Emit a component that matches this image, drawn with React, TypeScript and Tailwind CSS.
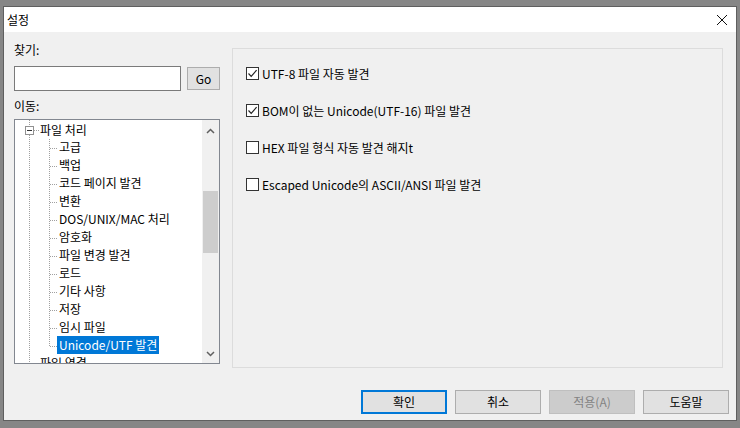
import React from "react";

const F = { fontFamily: '"Noto Sans CJK KR", "Noto Sans", sans-serif' };

function Check({ checked }: { checked: boolean }) {
  return (
    <span className="w-[13px] h-[13px] border border-[#333333] bg-white flex items-center justify-center shrink-0">
      {checked && (
        <svg width="11" height="11" viewBox="0 0 11 11">
          <path d="M1.5 5.5 L4.2 8.3 L9.6 2.2" fill="none" stroke="#222" strokeWidth="1.2" />
        </svg>
      )}
    </span>
  );
}

const children = [
  "고급",
  "백업",
  "코드 페이지 발견",
  "변환",
  "DOS/UNIX/MAC 처리",
  "암호화",
  "파일 변경 발견",
  "로드",
  "기타 사항",
  "저장",
  "임시 파일",
  "Unicode/UTF 발견",
];

function TreeLines() {
  const hs = children.map((_, i) => 10 + 18 * (i + 1));
  return (
    <svg className="absolute left-0 top-0" width="60" height="242">
      <g stroke="#a0a0a0" strokeWidth="1" strokeDasharray="1 1" fill="none">
        <line x1="14.5" y1="0" x2="14.5" y2="6" />
        <line x1="14.5" y1="15" x2="14.5" y2="242" />
        <line x1="19" y1="10.5" x2="24" y2="10.5" />
        <line x1="34.5" y1="19" x2="34.5" y2={hs[hs.length - 1]} />
        {hs.map((y) => (
          <line key={y} x1="35" y1={y + 0.5} x2="42" y2={y + 0.5} />
        ))}
      </g>
      <rect x="10.5" y="6.5" width="8" height="8" fill="white" stroke="#919191" />
      <line x1="12" y1="10.5" x2="17" y2="10.5" stroke="#333" />
    </svg>
  );
}

function Btn({ label, kind }: { label: string; kind?: "default" | "disabled" }) {
  const cls =
    kind === "default"
      ? "border-2 border-[#0078d7] bg-[#e1e1e1] text-black"
      : kind === "disabled"
      ? "border border-[#bfbfbf] bg-[#cccccc] text-[#838383]"
      : "border border-[#adadad] bg-[#e1e1e1] text-black";
  return (
    <div className={`w-[86px] h-[24px] flex items-center justify-center text-[12px] ${cls}`}>{label}</div>
  );
}

export default function App() {
  return (
    <div className="w-[740px] h-[428px] bg-[#868686] pl-[3px] pt-[6px] overflow-hidden" style={F}>
      <div className="w-[734px] h-[415px] border border-[#5f5f5f] bg-[#f0f0f0] flex flex-col">
        <div className="h-[25px] bg-white flex items-center justify-between pl-[3px] pr-[8px] shrink-0">
          <span className="text-[12px] text-black">설정</span>
          <svg width="12" height="12" viewBox="0 0 12 12">
            <path d="M1 1 L11 11 M11 1 L1 11" stroke="#111" strokeWidth="1" />
          </svg>
        </div>
        <div className="flex pl-[10px] pr-[12px] pt-[16px] gap-[12px]">
          <div className="w-[206px] flex flex-col">
            <div className="text-[12px] leading-[16px] text-black mt-[-6px]">찾기:</div>
            <div className="flex gap-[6px] mt-[8px]">
              <div className="w-[167px] h-[25px] bg-white border border-[#7a7a7a]" />
              <div className="w-[33px] h-[23px] mt-[1px] bg-[#e1e1e1] border border-[#adadad] flex items-center justify-center text-[12px] text-black">
                Go
              </div>
            </div>
            <div className="text-[12px] leading-[16px] text-black mt-[7px]">이동:</div>
            <div className="mt-[5px] h-[245px] bg-white border border-[#828790] flex">
              <div className="relative flex-1 overflow-hidden">
                <TreeLines />
                <div className="flex flex-col text-[12px] text-black">
                  <div className="h-[18px] flex items-center pl-[25px] pt-[1px]">파일 처리</div>
                  {children.map((c, i) => (
                    <div key={c} className="h-[18px] flex items-center pl-[42px]">
                      <span
                        className={
                          i === children.length - 1
                            ? "bg-[#0078d7] text-white px-[2px] h-[18px] flex items-center"
                            : "px-[2px]"
                        }
                      >
                        {c}
                      </span>
                    </div>
                  ))}
                  <div className="h-[18px] flex items-center pl-[25px]">파일 연결</div>
                </div>
              </div>
              <div className="w-[17px] bg-[#f0f0f0] flex flex-col items-center">
                <div className="h-[17px] flex items-center justify-center mt-[2px]">
                  <svg width="9" height="6" viewBox="0 0 9 6">
                    <path d="M1 5 L4.5 1.5 L8 5" fill="none" stroke="#606060" strokeWidth="1.5" />
                  </svg>
                </div>
                <div className="w-[15px] h-[62px] bg-[#cdcdcd] mt-[52px]" />
                <div className="flex-1" />
                <div className="h-[17px] flex items-center justify-center mb-[1px]">
                  <svg width="9" height="6" viewBox="0 0 9 6">
                    <path d="M1 1 L4.5 4.5 L8 1" fill="none" stroke="#606060" strokeWidth="1.5" />
                  </svg>
                </div>
              </div>
            </div>
          </div>
          <div className="w-[491px] h-[320px] border border-[#dcdcdc] flex flex-col pl-[13px] pt-[17px] gap-[22px] text-[12px] text-black">
            {[
              ["UTF-8 파일 자동 발견", true],
              ["BOM이 없는 Unicode(UTF-16) 파일 발견", true],
              ["HEX 파일 형식 자동 발견 해지t", false],
              ["Escaped Unicode의 ASCII/ANSI 파일 발견", false],
            ].map(([t, c]) => (
              <div key={t as string} className="h-[15px] flex items-center gap-[3px]">
                <Check checked={c as boolean} />
                <span>{t as string}</span>
              </div>
            ))}
          </div>
        </div>
        <div className="flex justify-end gap-[8px] pr-[4px] mt-[22px] mr-[3px]">
          <Btn label="확인" kind="default" />
          <Btn label="취소" />
          <Btn label="적용(A)" kind="disabled" />
          <Btn label="도움말" />
        </div>
      </div>
    </div>
  );
}
